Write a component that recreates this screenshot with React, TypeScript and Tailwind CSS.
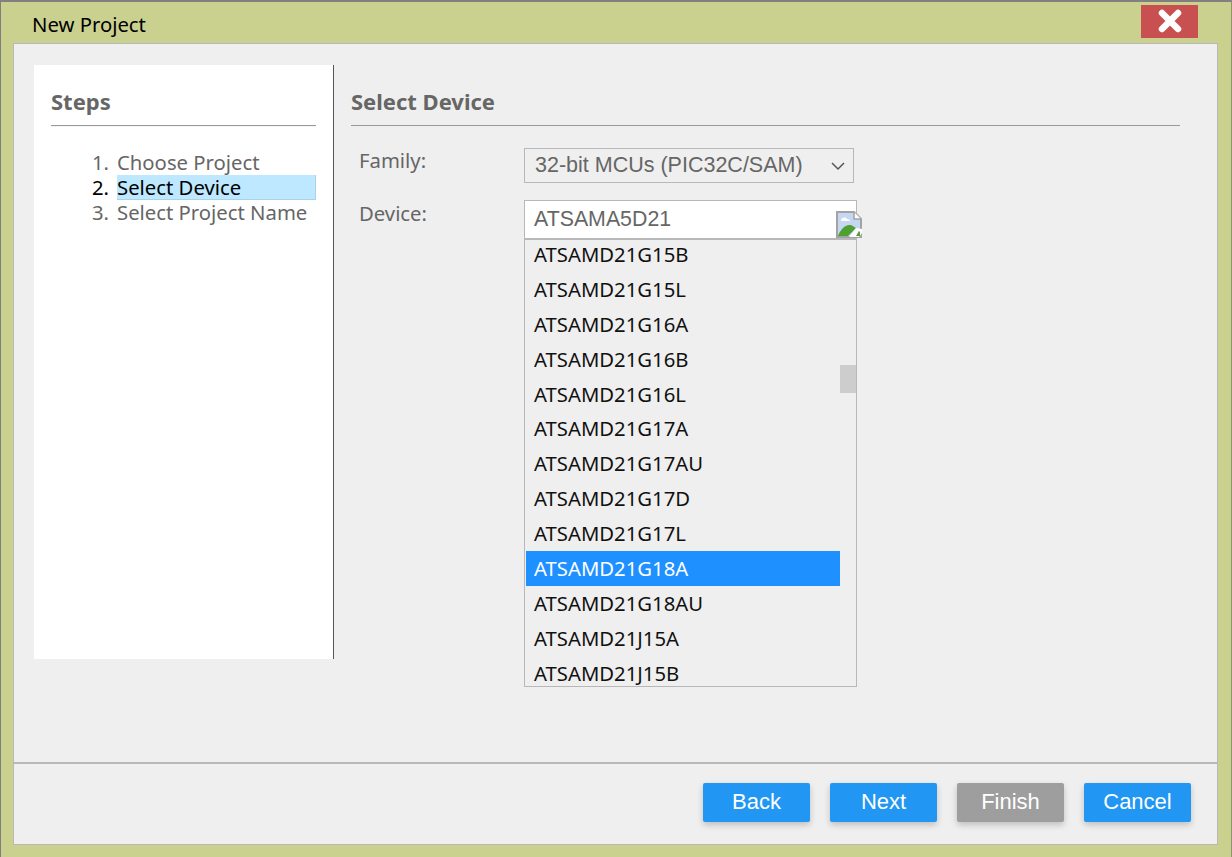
const devices = [
  "ATSAMD21G15B",
  "ATSAMD21G15L",
  "ATSAMD21G16A",
  "ATSAMD21G16B",
  "ATSAMD21G16L",
  "ATSAMD21G17A",
  "ATSAMD21G17AU",
  "ATSAMD21G17D",
  "ATSAMD21G17L",
  "ATSAMD21G18A",
  "ATSAMD21G18AU",
  "ATSAMD21J15A",
  "ATSAMD21J15B",
];

const uiFont = "font-['Noto_Sans','DejaVu_Sans',sans-serif]";
const webFont = "font-['Liberation_Sans',Arial,sans-serif]";

const BrokenImage = () => (
  <svg width="26" height="27" viewBox="0 0 26 27" className="absolute left-[312px] top-[11px]">
    <path d="M1 1h17l7 7v18H1z" fill="#c5d7f2" stroke="#a3a3a3" strokeWidth="2" />
    <path d="M18 1v7h7" fill="#fff" stroke="#a3a3a3" strokeWidth="1.5" />
    <path d="M5 9c1-3 5-3 6-1 2 0 3 1 3 2H5z" fill="#fff" />
    <path d="M2 25c2-6 7-12 13-11l5 3-8 8z" fill="#4fa032" />
    <path d="M13 26l7-9 6 1v4l-3 4z" fill="#fff" />
    <path d="M20 25l3-5 1 1v4z" fill="#4fa032" />
  </svg>
);

const FooterButton = ({ label, disabled }: { label: string; disabled?: boolean }) => (
  <button
    className={`w-[107px] h-[39px] pb-[2px] rounded-[2px] text-white text-[22px] shadow-[0_3px_6px_rgba(0,0,0,0.2)] ${webFont} ${
      disabled ? "bg-[#9e9e9e]" : "bg-[#2196f3]"
    }`}
  >
    {label}
  </button>
);

export default function App() {
  return (
    <div className={`w-[1232px] h-[857px] flex flex-col overflow-hidden bg-[#cad18f] border-t-2 border-l border-r border-[#808080] border-r-[#8f9470] ${uiFont}`}>
      <div className="h-[41px] shrink-0 flex items-center justify-between pl-[31px] pr-[33px]">
        <span className="text-[20.3px] text-black mt-[4px]">New Project</span>
        <button className="w-[57px] h-[33px] -mt-[3px] bg-[#c85050] flex items-center justify-center">
          <svg width="24" height="24" viewBox="0 0 24 24">
            <path d="M4 4l16 16M20 4L4 20" stroke="#fff" strokeWidth="6.5" strokeLinecap="round" />
          </svg>
        </button>
      </div>

      <div className="w-[1205px] h-[802px] ml-[12px] flex flex-col bg-[#efefef] border border-[#b8b8b8]">
        <div className="h-[718px] shrink-0 flex pt-[21px] pl-[20px]">
          <div className="w-[300px] h-[594px] shrink-0 bg-white border-r border-[#555555] pl-[17px] pr-[17px] pt-[23px]">
            <h2 className="h-[27px] text-[22px] leading-[27px] font-bold text-[#666666]">Steps</h2>
            <div className="mt-[10px] border-t border-[#999999] h-[2px] bg-[#f4f4f4]" />
            <ol className="mt-[23px] text-[20.3px] leading-[25px] text-[#666666]">
              <li className="flex h-[25px]">
                <span className="w-[66px] pl-[41px] shrink-0">1.</span>
                <span>Choose Project</span>
              </li>
              <li className="flex h-[25px] text-black">
                <span className="w-[66px] pl-[41px] shrink-0">2.</span>
                <span className="flex-1 leading-[24px] bg-[#bde8ff] border-b border-r border-[#a9d3e6]">Select Device</span>
              </li>
              <li className="flex h-[25px]">
                <span className="w-[66px] pl-[41px] shrink-0">3.</span>
                <span>Select Project Name</span>
              </li>
            </ol>
          </div>

          <div className="flex-1 pl-[17px] pt-[23px]">
            <h2 className="h-[27px] text-[22px] leading-[27px] font-bold text-[#666666]">Select Device</h2>
            <div className="mt-[10px] w-[829px] border-t border-[#999999]" />

            <div className="mt-[22px] flex items-start">
              <label className="w-[173px] pl-[8px] text-[20.3px] leading-[26px] -mt-px text-[#666666]">Family:</label>
              <div className={`w-[330px] h-[35px] flex items-center justify-between pl-[10px] pr-[6px] border border-[#b8b8b8] text-[21.5px] text-[#666666] ${webFont}`}>
                <span>32-bit MCUs (PIC32C/SAM)</span>
                <svg width="18" height="18" viewBox="0 0 18 18" fill="none">
                  <path d="M3 6l6 6 6-6" stroke="#555555" strokeWidth="1.5" />
                </svg>
              </div>
            </div>

            <div className="mt-[17px] flex items-start">
              <label className="w-[173px] pl-[8px] text-[20.3px] leading-[26px] text-[#666666]">Device:</label>
              <div className="relative w-[333px]">
                <div className={`h-[40px] flex items-center pl-[9px] bg-white border-x border-t border-b-2 border-[#b8b8b8] text-[21.33px] text-[#666666] ${webFont}`}>
                  ATSAMA5D21
                </div>
                <BrokenImage />
                <div className="relative h-[447px] overflow-hidden border-x border-b border-[#b8b8b8] pl-px pr-[16px]">
                  <div className="-mt-[3px]">
                    {devices.map((d) => (
                      <div
                        key={d}
                        className={`h-[34.9px] pl-[8px] text-[20.3px] leading-[35px] ${
                          d === "ATSAMD21G18A" ? "bg-[#1e90ff] text-white" : "text-[#111111]"
                        }`}
                      >
                        {d}
                      </div>
                    ))}
                  </div>
                  <div className="absolute right-0 top-[125px] w-[16px] h-[28px] bg-[#cdcdcd]" />
                </div>
              </div>
            </div>
          </div>
        </div>

        <div className="h-[2px] shrink-0 bg-[#b8b8b8]" />

        <div className="flex-1 flex justify-end gap-[20px] pt-[19px] pr-[26px]">
          <FooterButton label="Back" />
          <FooterButton label="Next" />
          <FooterButton label="Finish" disabled />
          <FooterButton label="Cancel" />
        </div>
      </div>
    </div>
  );
}
